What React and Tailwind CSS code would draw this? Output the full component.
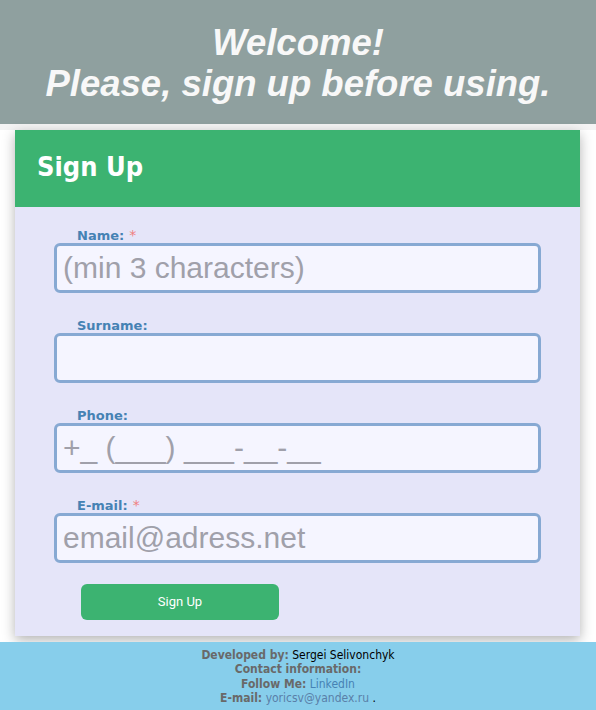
import React from "react";

function Field({ label, required, placeholder }) {
  return (
    <div className="flex flex-col">
      <div className="h-[15px] pl-[62px] text-[13px] leading-[15px] font-bold text-[#4682b4] font-['DejaVu_Sans',Verdana,sans-serif]">
        {label}
        <span className={required ? "ml-[5px] font-normal text-[14px] text-[#f08080]" : "hidden"}>*</span>
      </div>
      <input
        className="ml-[39px] box-border h-[50px] w-[487px] rounded-[6px] border-[3px] border-[#87a9d3] bg-[#f5f5ff] px-[6px] text-[30px] text-gray-700 outline-none placeholder:text-[#a0a0aa] font-['Liberation_Sans',Arial,sans-serif]"
        placeholder={placeholder}
      />
    </div>
  );
}

export default function App() {
  return (
    <div className="flex min-h-[710px] w-[596px] flex-col bg-white">
      <header className="flex h-[124px] flex-col items-center justify-center bg-[#8fa09f] pt-[2px] text-[36.5px] font-bold italic leading-[41px] text-[#f8f8f8] font-['Liberation_Sans',Arial,sans-serif]">
        <div>Welcome!</div>
        <div>Please, sign up before using.</div>
      </header>
      <div className="h-[6px] bg-[#f4f4f4]" />
      <div className="ml-[15px] w-[565px] bg-[#e5e5f9] shadow-[0_4px_12px_rgba(0,0,0,0.3)]">
        <div className="flex h-[77px] items-center bg-[#3cb371] pl-[22px] pb-[2px] text-[27px] font-bold text-white font-['DejaVu_Sans_Condensed','DejaVu_Sans',sans-serif] font-stretch-condensed">
          Sign Up
        </div>
        <div className="flex flex-col gap-[25px] pt-[21px]">
          <Field label="Name:" required placeholder="(min 3 characters)" />
          <Field label="Surname:" placeholder="" />
          <Field label="Phone:" placeholder="+_ (___) ___-__-__" />
          <Field label="E-mail:" required placeholder="email@adress.net" />
        </div>
        <div className="pl-[66px] pt-[21px] pb-[16px]">
          <button className="h-[36px] w-[198px] rounded-[6px] bg-[#3cb371] text-[13px] text-white font-['Roboto',sans-serif]">
            Sign Up
          </button>
        </div>
      </div>
      <div className="h-[6px]" />
      <footer className="flex h-[68px] flex-col items-center bg-[#87ceeb] pt-[6px] text-[12px] leading-[14.3px] text-[#696969] font-['DejaVu_Sans_Condensed','DejaVu_Sans',sans-serif] font-stretch-condensed">
        <div>
          <span className="font-bold">Developed by:</span>{" "}
          <span className="text-black">Sergei Selivonchyk</span>
        </div>
        <div className="font-bold">Contact information:</div>
        <div>
          <span className="font-bold">Follow Me:</span>{" "}
          <a className="text-[#4682b4]">LinkedIn</a>
        </div>
        <div>
          <span className="font-bold">E-mail:</span>{" "}
          <a className="text-[#5a7fa8]">yoricsv@yandex.ru</a>{" "}
          <span className="text-black">.</span>
        </div>
      </footer>
    </div>
  );
}
